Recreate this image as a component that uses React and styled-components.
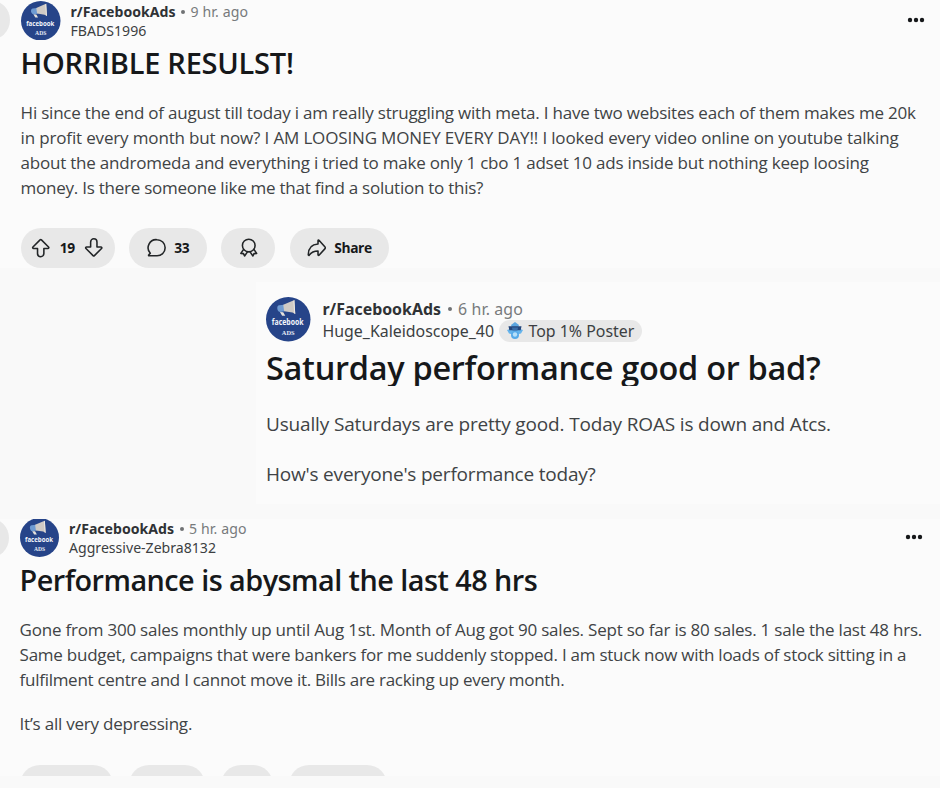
import styled, { createGlobalStyle } from 'styled-components';

const GlobalStyle = createGlobalStyle`
  * {
    box-sizing: border-box;
  }
  body {
    margin: 0;
    background: #f9f9f9;
    font-family: 'Open Sans', 'Noto Sans', sans-serif;
    overflow: hidden;
  }
  h1, p {
    margin: 0;
  }
`;

const Page = styled.main`
  display: flex;
  flex-direction: column;
  width: 940px;
  height: 788px;
  overflow: hidden;
  background: #f9f9f9;
`;

const Post = styled.article`
  flex: none;
  height: 268px;
  overflow: hidden;
  background: #fbfbfb;
`;

const InsetPost = styled(Post)`
  height: 222px;
  margin: 14px 0 15px 256px;
  padding: 15px 0 0 10px;
`;

const CroppedPost = styled(Post)`
  height: 257px;
`;

const PostHeader = styled.header`
  display: flex;
  align-items: flex-start;
  height: ${props => props.$height}px;
  margin-top: ${props => props.$shift || 0}px;
`;

const BackButton = styled.button`
  flex: none;
  width: 40px;
  height: 40px;
  margin-left: ${props => props.$offset}px;
  margin-right: 11px;
  padding: 0;
  border: 0;
  border-radius: 50%;
  background: #e8e8e8;
`;

const AvatarSvg = styled.svg`
  flex: none;
  width: ${props => props.$size}px;
  height: ${props => props.$size}px;
  margin-top: ${props => props.$top || 0}px;
  margin-right: ${props => props.$gap}px;
`;

const Meta = styled.div`
  font-family: 'Noto Sans', sans-serif;
  font-size: ${props => props.$size}px;
  line-height: ${props => props.$line}px;
  padding-top: ${props => props.$top || 0}px;
  color: #3c3f42;
  white-space: nowrap;
`;

const MetaRow = styled.div`
  display: flex;
  align-items: center;
`;

const Community = styled.strong`
  font-weight: 700;
  color: #2f3235;
`;

const Dot = styled.i`
  width: 4px;
  height: 4px;
  margin: 1px ${props => props.$gap || 5.5}px 0;
  border-radius: 50%;
  background: #707274;
`;

const Time = styled.span`
  color: #777a7c;
  letter-spacing: 0.12px;
`;

const Flair = styled.span`
  display: flex;
  align-items: center;
  width: 143px;
  height: 22px;
  margin-left: 5px;
  padding-left: 8px;
  border-radius: 11px;
  background: #e8e8e8;
  svg {
    margin-right: 5.5px;
  }
`;

const MoreButton = styled.button`
  display: flex;
  margin: ${props => props.$top}px ${props => props.$right}px 0 auto;
  padding: 0;
  border: 0;
  background: none;
`;

const Title = styled.h1`
  height: ${props => props.$height}px;
  padding-left: ${props => props.$indent || 0}px;
  overflow: hidden;
  font-size: ${props => props.$size}px;
  font-weight: 580;
  line-height: ${props => props.$line}px;
  letter-spacing: ${props => props.$spacing}px;
  color: #16181a;
  white-space: nowrap;
`;

const Body = styled.div`
  margin-top: ${props => props.$top}px;
  padding-left: ${props => props.$indent || 0}px;
  font-size: ${props => props.$size}px;
  line-height: ${props => props.$line}px;
  color: #404345;
  white-space: nowrap;
  p + p {
    margin-top: ${props => props.$gap}px;
  }
`;

const Line = styled.span`
  display: block;
  letter-spacing: ${props => props.$spacing}px;
`;

const Actions = styled.div`
  display: flex;
  gap: ${props => props.$gap}px;
  margin-top: ${props => props.$top}px;
  padding-left: ${props => props.$indent}px;
`;

const Pill = styled.div`
  display: flex;
  align-items: center;
  justify-content: center;
  gap: ${props => props.$gap || 8}px;
  width: ${props => props.$width}px;
  height: 40px;
  border-radius: 20px;
  background: #e8e8e8;
  color: #16181a;
  font-size: 13.8px;
  font-weight: 700;
  letter-spacing: -0.4px;
`;

const VotePill = styled(Pill)`
  justify-content: flex-start;
  padding-left: 10px;
`;

const Stroke = styled.svg`
  flex: none;
  width: 19.5px;
  height: 19.5px;
  fill: none;
  stroke: #222527;
  stroke-width: 1.6;
  stroke-linejoin: round;
  stroke-linecap: round;
`;

const DownStroke = styled(Stroke)`
  transform: rotate(180deg);
`;

const arrowPath =
  'M9.3 1.9 2 9.2c-.6.6-.2 1.5.6 1.5h4.1v5.2a3.2 3.2 0 0 0 6.5 0v-5.2h4.2c.8 0 1.2-.9.6-1.5L10.7 1.9a1 1 0 0 0-1.4 0z';

const Avatar = props => (
  <AvatarSvg viewBox="0 0 40 40" {...props}>
    <circle cx="20" cy="20" r="20" fill="#264489" />
    <path d="M12 7.5c-1.5.2-2 1.4-1.8 3s1 3 2.6 3l4-.7-.5-5.8z" fill="#6f9bd2" />
    <path d="m15.5 7 8-3.4 2-.8.8 12.5-2.5-1.4-7.5-1.2z" fill="#cfcac5" />
    <path d="m12.5 13.5 3 .1 1.8 3.2h-2.8z" fill="#e6e2dc" />
    <path d="m24.6 3.5.9-.7.8 12.5-1-.6z" fill="#eee9e1" />
    <text x="19.5" y="25" textAnchor="middle" textLength="28.5" lengthAdjust="spacingAndGlyphs" fill="#f2f5fb" fontFamily="Open Sans, sans-serif" fontSize="7.6" fontWeight="700">facebook</text>
    <text x="20" y="34" textAnchor="middle" textLength="11.5" lengthAdjust="spacingAndGlyphs" fill="#e6ebf6" fontFamily="Liberation Serif, serif" fontSize="5.2" fontWeight="700">ADS</text>
  </AvatarSvg>
);

const More = props => (
  <MoreButton {...props}>
    <svg width="18" height="6" viewBox="0 0 18 6" fill="#16181a">
      <circle cx="3" cy="3" r="2.2" />
      <circle cx="9" cy="3" r="2.2" />
      <circle cx="15" cy="3" r="2.2" />
    </svg>
  </MoreButton>
);

const PosterBadge = () => (
  <svg width="16" height="18" viewBox="0 0 16 18">
    <path d="M8 0 12 3l-1.5 4h-5L4 3z" fill="#5ba5e0" />
    <path d="m0 8 3-1h10l3 1-2 3.5-3 .8-3 1-3-1-3-.8z" fill="#66b4ec" />
    <path d="M1.5 4.2h13l-.8 4H2.3z" fill="#24477d" />
    <path d="M5 5.5h6l-.5 3h-5z" fill="#386da9" />
    <circle cx="8" cy="13" r="4" fill="#56aae9" />
    <circle cx="8" cy="12.5" r="2.2" fill="#b5e0fa" />
  </svg>
);

const App = () => {
  return (
    <>
      <GlobalStyle />
      <Page>
        <Post>
          <PostHeader $height={45}>
            <BackButton $offset={-30} />
            <Avatar $size={39.5} $top={0.7} $gap={10} />
            <Meta $size={14.1} $line={19} $top={2}>
              <MetaRow>
                <Community>r/FacebookAds</Community>
                <Dot />
                <Time>9 hr. ago</Time>
              </MetaRow>
              <MetaRow>FBADS1996</MetaRow>
            </Meta>
            <More $top={17} $right={15} />
          </PostHeader>
          <Title $size={29} $line={36} $height={36} $indent={20.5} $spacing={-0.25}>
            HORRIBLE RESULST!
          </Title>
          <Body $size={17} $line={24.8} $top={20.2} $indent={20.6}>
            <p>
              <Line $spacing={-0.217}>Hi since the end of august till today i am really struggling with meta. I have two websites each of them makes me 20k</Line>
              <Line $spacing={-0.157}>in profit every month but now? I AM LOOSING MONEY EVERY DAY!! I looked every video online on youtube talking</Line>
              <Line $spacing={-0.217}>about the andromeda and everything i tried to make only 1 cbo 1 adset 10 ads inside but nothing keep loosing</Line>
              <Line $spacing={-0.25}>money. Is there someone like me that find a solution to this?</Line>
            </p>
          </Body>
          <Actions $top={27.5} $indent={20.5} $gap={14.6}>
            <VotePill $width={94.3} $gap={9.7}>
              <Stroke viewBox="0 0 20 20"><path d={arrowPath} /></Stroke>
              19
              <DownStroke viewBox="0 0 20 20"><path d={arrowPath} /></DownStroke>
            </VotePill>
            <Pill $width={77.4}>
              <Stroke viewBox="0 0 20 20">
                <path d="M10.3 1.7a8.3 8.3 0 1 1 0 16.6H2.2c-.6 0-.8-.6-.4-1l1.6-1.7A8.3 8.3 0 0 1 10.3 1.7z" />
              </Stroke>
              33
            </Pill>
            <Pill $width={53.8}>
              <Stroke viewBox="0 0 20 20">
                <circle cx="10" cy="7.7" r="6.5" />
                <path d="m4.7 11.6-2.8 4.2 2.7.2 1.1 2.5 3-4.3M15.3 11.6l2.8 4.2-2.7.2-1.1 2.5-3-4.3" />
              </Stroke>
            </Pill>
            <Pill $width={99}>
              <Stroke viewBox="0 0 20 20">
                <path d="M11.3 2.6v3.6C5 6.5 1.4 10.5 1.3 17.3c0 .5.6.7.9.3 2.3-3 5-4.2 9.1-4.2v3.7c0 .6.6.9 1 .5l6.2-6.7c.4-.5.4-1.2 0-1.6l-6.2-7c-.4-.4-1-.2-1 .3z" />
              </Stroke>
              Share
            </Pill>
          </Actions>
        </Post>

        <InsetPost>
          <PostHeader $height={50.5}>
            <Avatar $size={44.5} $gap={12} />
            <Meta $size={15.9} $line={22} $top={0.8}>
              <MetaRow>
                <Community>r/FacebookAds</Community>
                <Dot $gap={6.6} />
                <Time>6 hr. ago</Time>
              </MetaRow>
              <MetaRow>
                Huge_Kaleidoscope_40
                <Flair>
                  <PosterBadge />
                  Top 1% Poster
                </Flair>
              </MetaRow>
            </Meta>
          </PostHeader>
          <Title $size={32.5} $line={40} $height={38.6} $spacing={-0.3}>
            Saturday performance good or bad?
          </Title>
          <Body $size={19} $line={28} $top={23.9} $gap={22}>
            <p><Line $spacing={-0.16}>Usually Saturdays are pretty good. Today ROAS is down and Atcs.</Line></p>
            <p><Line $spacing={-0.2}>How's everyone's performance today?</Line></p>
          </Body>
        </InsetPost>

        <CroppedPost>
          <PostHeader $height={43.5} $shift={-1}>
            <BackButton $offset={-31} />
            <Avatar $size={39} $gap={10} />
            <Meta $size={14.1} $line={19.2} $top={1}>
              <MetaRow>
                <Community>r/FacebookAds</Community>
                <Dot />
                <Time>5 hr. ago</Time>
              </MetaRow>
              <MetaRow>Aggressive-Zebra8132</MetaRow>
            </Meta>
            <More $top={16} $right={17} />
          </PostHeader>
          <Title $size={28.8} $line={36} $height={34.5} $indent={19.5} $spacing={-0.53}>
            Performance is abysmal the last 48 hrs
          </Title>
          <Body $size={17} $line={24.8} $top={22.1} $gap={19.8} $indent={19.6}>
            <p>
              <Line $spacing={-0.22}>Gone from 300 sales monthly up until Aug 1st. Month of Aug got 90 sales. Sept so far is 80 sales. 1 sale the last 48 hrs.</Line>
              <Line $spacing={-0.25}>Same budget, campaigns that were bankers for me suddenly stopped. I am stuck now with loads of stock sitting in a</Line>
              <Line $spacing={-0.28}>fulfilment centre and I cannot move it. Bills are racking up every month.</Line>
            </p>
            <p><Line $spacing={-0.22}>It’s all very depressing.</Line></p>
          </Body>
          {/* only the top of this row shows, down to the tip of the vote arrow */}
          <Actions $top={28.2} $indent={20} $gap={15.8}>
            <VotePill $width={93}>
              <Stroke viewBox="0 0.8 20 20"><path d={arrowPath} /></Stroke>
            </VotePill>
            <Pill $width={76} />
            <Pill $width={52.5} />
            <Pill $width={98} />
          </Actions>
        </CroppedPost>
      </Page>
    </>
  );
};

export default App;
